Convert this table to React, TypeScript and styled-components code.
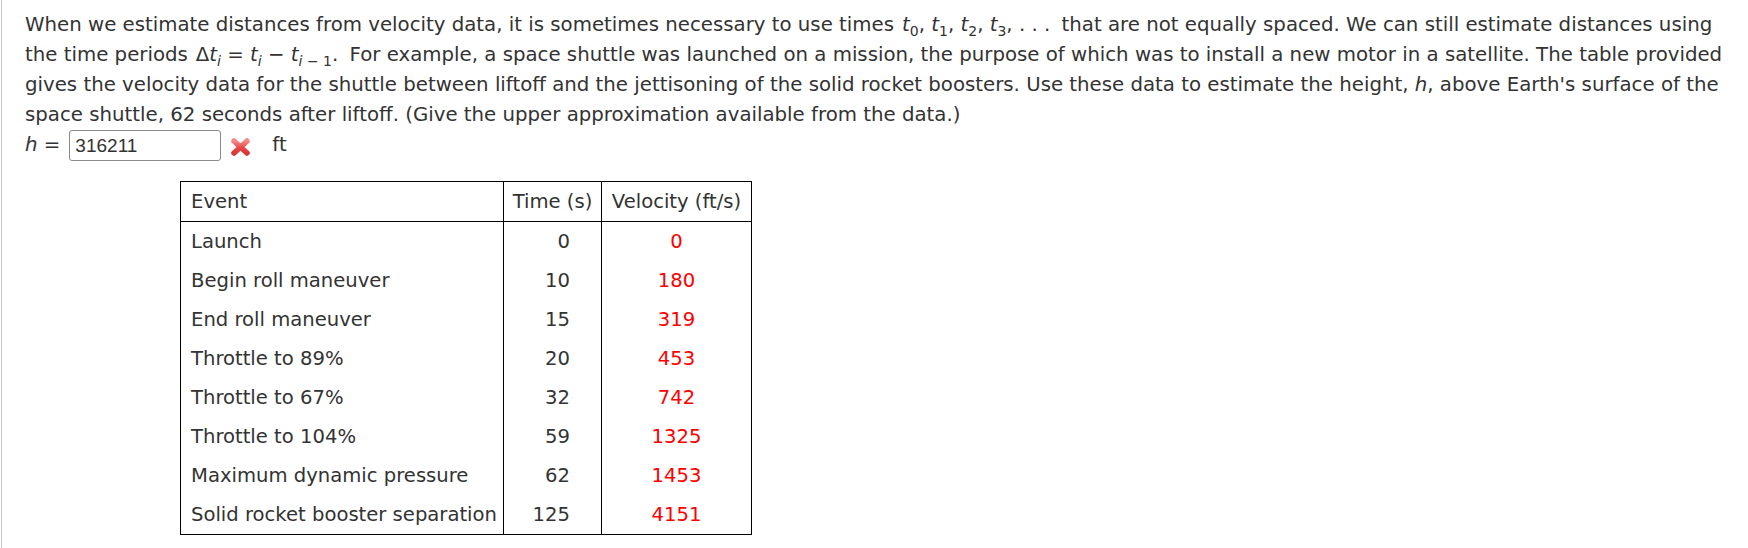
import React from 'react'
import styled, { createGlobalStyle } from 'styled-components'

const GlobalStyle = createGlobalStyle`
  html, body {
    margin: 0;
    padding: 0;
    background: #fff;
  }
  body {
    font-family: "DejaVu Sans", Verdana, sans-serif;
    color: #333;
  }
`

const rows = [
  { event: 'Launch', time: 0, velocity: 0 },
  { event: 'Begin roll maneuver', time: 10, velocity: 180 },
  { event: 'End roll maneuver', time: 15, velocity: 319 },
  { event: 'Throttle to 89%', time: 20, velocity: 453 },
  { event: 'Throttle to 67%', time: 32, velocity: 742 },
  { event: 'Throttle to 104%', time: 59, velocity: 1325 },
  { event: 'Maximum dynamic pressure', time: 62, velocity: 1453 },
  { event: 'Solid rocket booster separation', time: 125, velocity: 4151 },
]

const Page = styled.div`
  padding-left: 1px;
  min-height: 548px;
  box-sizing: border-box;
  display: flex;
`

const Question = styled.div`
  flex: 1;
  border-left: 1px solid #c8c8c8;
  padding: 10px 0 0 23px;
  font-size: 19.75px;
  line-height: 30px;
`

const Prompt = styled.p`
  margin: 0;
  white-space: nowrap;
`

const MathExpr = styled.span`
  margin: 0 5px 0 8px;
  white-space: nowrap;
`

const Var = styled.i`
  font-style: italic;
`

const Sub = styled.sub<{ $italic?: boolean }>`
  font-size: 14px;
  vertical-align: -5px;
  line-height: 0;
  font-style: ${(p) => (p.$italic ? 'italic' : 'normal')};
`

const AnswerRow = styled.div`
  display: flex;
  align-items: center;
  height: 30px;
`

const EqLabel = styled.span`
  margin-right: 9px;
`

const AnswerInput = styled.input`
  box-sizing: border-box;
  width: 152px;
  height: 31px;
  border: 1px solid #8a8a8a;
  border-radius: 3px;
  padding: 1px 5px 0;
  font-family: "Liberation Sans", Arial, sans-serif;
  font-size: 19px;
  color: #333;
  background: #fff;
  outline: none;
`

const WrongMark = styled.span`
  display: inline-flex;
  margin: 4px 0 0 9px;
  width: 21px;
  height: 20px;
`

const Unit = styled.span`
  margin-left: 21px;
`

const DataTable = styled.table`
  margin: 21px 0 0 155px;
  border-collapse: collapse;
  border: 1px solid #000;
  table-layout: fixed;
  font-size: 19.6px;
  line-height: 24px;
  color: #333;
`

const HeadCell = styled.th<{ $align?: string; $w: number }>`
  width: ${(p) => p.$w}px;
  height: 40px;
  padding: 0 ${(p) => (p.$align === 'left' ? '10px' : '4px')};
  font-weight: normal;
  text-align: ${(p) => p.$align || 'center'};
  border: 1px solid #000;
  white-space: nowrap;
  box-sizing: border-box;
`

const Cell = styled.td<{ $kind: 'event' | 'time' | 'velocity' }>`
  height: 39px;
  padding: ${(p) => (p.$kind === 'time' ? '0 31px 0 0' : p.$kind === 'event' ? '0 0 0 10px' : '0')};
  text-align: ${(p) => (p.$kind === 'event' ? 'left' : p.$kind === 'time' ? 'right' : 'center')};
  color: ${(p) => (p.$kind === 'velocity' ? '#ff0000' : '#333')};
  border-left: 1px solid #000;
  border-right: 1px solid #000;
  white-space: nowrap;
`

const CrossIcon = () => (
  <svg width="21" height="20" viewBox="0 0 21 20">
    <defs>
      <linearGradient id="xg" x1="0" y1="0" x2="0" y2="1">
        <stop offset="0" stopColor="#f58a8a" />
        <stop offset="0.5" stopColor="#ea4c4c" />
        <stop offset="1" stopColor="#d93636" />
      </linearGradient>
    </defs>
    <path d="M4 4 L17 16 M17 4 L4 16" stroke="url(#xg)" strokeWidth="5.5" strokeLinecap="round" fill="none" />
  </svg>
)

const App = () => {
  return (
    <Page>
      <GlobalStyle />
      <Question>
        <Prompt>
          When we estimate distances from velocity data, it is sometimes necessary to use times
          <MathExpr>
            <Var>t</Var><Sub>0</Sub>, <Var>t</Var><Sub>1</Sub>, <Var>t</Var><Sub>2</Sub>, <Var>t</Var><Sub>3</Sub>, . . .
          </MathExpr>
          {' '}that are not equally spaced. We can still estimate distances using
          <br />
          the time periods
          <MathExpr>
            Δ<Var>t</Var><Sub $italic>i</Sub> = <Var>t</Var><Sub $italic>i</Sub> − <Var>t</Var><Sub><i>i</i> − 1</Sub>.
          </MathExpr>
          {' '}For example, a space shuttle was launched on a mission, the purpose of which was to install a new motor in a satellite. The table provided
          <br />
          gives the velocity data for the shuttle between liftoff and the jettisoning of the solid rocket boosters. Use these data to estimate the height, <Var>h</Var>, above Earth's surface of the
          <br />
          space shuttle, 62 seconds after liftoff. (Give the upper approximation available from the data.)
        </Prompt>
        <AnswerRow>
          <EqLabel><Var>h</Var> =</EqLabel>
          <AnswerInput defaultValue="316211" />
          <WrongMark><CrossIcon /></WrongMark>
          <Unit>ft</Unit>
        </AnswerRow>
        <DataTable>
          <thead>
            <tr>
              <HeadCell $align="left" $w={323}>Event</HeadCell>
              <HeadCell $w={98}>Time (s)</HeadCell>
              <HeadCell $w={150}>Velocity (ft/s)</HeadCell>
            </tr>
          </thead>
          <tbody>
            {rows.map((r) => (
              <tr key={r.event}>
                <Cell $kind="event">{r.event}</Cell>
                <Cell $kind="time">{r.time}</Cell>
                <Cell $kind="velocity">{r.velocity}</Cell>
              </tr>
            ))}
          </tbody>
        </DataTable>
      </Question>
    </Page>
  )
}

export default App
